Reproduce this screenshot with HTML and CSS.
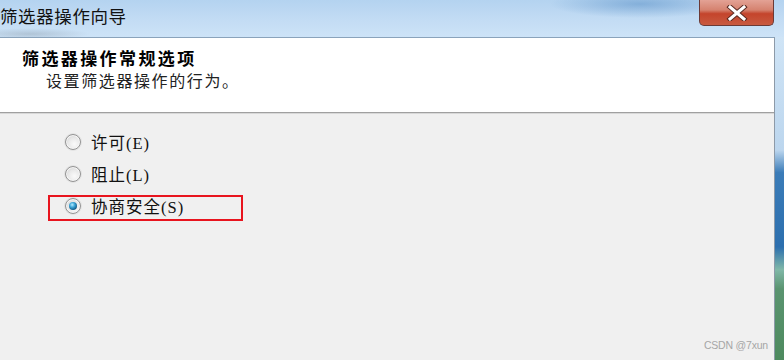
FILE: index.html
```html
<!DOCTYPE html>
<html lang="zh-CN">
<head>
  <meta charset="UTF-8">
  <meta name="viewport" content="width=device-width, initial-scale=1.0"/>
  <title>筛选器操作向导</title>
  <link rel="stylesheet" href="styles.css">
</head>
<body>
  <div class="window">
    <div class="titlebar">
      <span class="title">筛选器操作向导</span>
      <button class="close" title="关闭">
        <svg width="22" height="16" viewBox="0 0 22 16">
          <path d="M4 2 L18 14 M18 2 L4 14" stroke="#5a2a22" stroke-width="5" stroke-linecap="square"/>
          <path d="M4 2 L18 14 M18 2 L4 14" stroke="#ffffff" stroke-width="3" stroke-linecap="square"/>
        </svg>
      </button>
    </div>
    <div class="frame">
      <div class="client">
        <div class="head">
          <div class="head-title">筛选器操作常规选项</div>
          <div class="head-sub">设置筛选器操作的行为。</div>
        </div>
        <div class="content">
          <label class="option">
            <span class="radio"></span>
            <span class="label">许可(E)</span>
          </label>
          <label class="option">
            <span class="radio"></span>
            <span class="label">阻止(L)</span>
          </label>
          <label class="option marked">
            <span class="radio checked"></span>
            <span class="label">协商安全(S)</span>
          </label>
          <div class="watermark">CSDN @7xun</div>
        </div>
      </div>
      <div class="edge"></div>
    </div>
  </div>
</body>
</html>
```

FILE: styles.css
```css
body {
  margin: 0;
  padding: 0;
  width: 784px;
  height: 360px;
  overflow: hidden;
  font-family: "Noto Sans CJK SC", sans-serif;
}
.window {
  display: flex;
  flex-direction: column;
  height: 360px;
  background: #c9e0f5;
}
.titlebar {
  height: 37px;
  display: flex;
  align-items: flex-start;
  justify-content: space-between;
  background:
    radial-gradient(ellipse 90px 14px at 640px 4px, rgba(70,130,190,0.45), rgba(70,130,190,0) 100%),
    radial-gradient(ellipse 60px 6px at 30px 34px, rgba(80,90,100,0.22), rgba(80,90,100,0) 100%),
    linear-gradient(to bottom, #b4d3f0 0%, #c3dcf4 55%, #cde3f7 100%);
}
.title {
  font-size: 17.5px;
  line-height: 22px;
  color: #111;
  padding-top: 5px;
  letter-spacing: 0.6px;
}
.close {
  width: 75px;
  height: 26px;
  margin-right: 10px;
  border: 1px solid #6b3a36;
  border-top: none;
  border-radius: 0 0 5px 5px;
  background: linear-gradient(to bottom, #e3a295 0%, #d5826f 40%, #c4442c 55%, #c85a40 100%);
  display: flex;
  align-items: center;
  justify-content: center;
  padding: 0;
}
.frame {
  flex: 1;
  display: flex;
}
.client {
  width: 774px;
  border-top: 1px solid #8aa3bb;
  border-right: 1px solid #8d9aa8;
  display: flex;
  flex-direction: column;
  background: #f0f0f0;
}
.edge {
  flex: 1;
  background: linear-gradient(to bottom, #cfe4f6 0%, #bcd6ee 35%, #3b7cb8 42%, #2c6fae 65%, #80b8a8 72%, #5a9470 78%, #4d8a5e 100%);
}
.head {
  height: 75px;
  background: #ffffff;
  border-bottom: 1px solid #a0a0a0;
  box-shadow: 0 1px 0 #d8d8d8;
  padding-left: 22px;
  padding-top: 10px;
  box-sizing: border-box;
}
.head-title {
  font-size: 17px;
  font-weight: bold;
  line-height: 20px;
  letter-spacing: 2.4px;
  color: #000;
}
.head-sub {
  font-size: 16px;
  line-height: 20px;
  margin-top: 2px;
  margin-left: 24px;
  letter-spacing: 1.6px;
  color: #222;
}
.content {
  flex: 1;
  display: flex;
  flex-direction: column;
  gap: 6px;
  padding: 18px 0 0 48px;
}
.option {
  width: 195px;
  height: 26px;
  box-sizing: border-box;
  border: 2px solid transparent;
  padding: 0 0 4px 15px;
  display: flex;
  align-items: center;
  gap: 10px;
}
.option.marked {
  border-color: #e8141e;
}
.label {
  font-family: "Liberation Serif", "Noto Sans CJK SC", serif;
  font-size: 16.5px;
  letter-spacing: 1px;
  color: #111;
}
.radio {
  flex-shrink: 0;
  width: 14px;
  height: 14px;
  border-radius: 50%;
  border: 1px solid #939393;
  background: radial-gradient(circle at 60% 65%, #fafafa 0%, #e8e8e8 50%, #c8c8c8 100%);
  box-shadow: inset 0 0 0 1px #f6f6f6, 0 0 0 1px #e2e2e2;
  display: flex;
  align-items: center;
  justify-content: center;
}
.radio.checked::after {
  content: "";
  width: 8px;
  height: 8px;
  border-radius: 50%;
  background: radial-gradient(circle at 40% 35%, #b8ecff 0%, #3ca6d8 35%, #15608e 70%, #0c3a5a 100%);
}
.watermark {
  margin-top: auto;
  align-self: flex-end;
  padding: 0 6px 9px 0;
  font-family: "Liberation Sans", sans-serif;
  font-size: 10.5px;
  letter-spacing: -0.2px;
  color: #a6a6a6;
}
```
